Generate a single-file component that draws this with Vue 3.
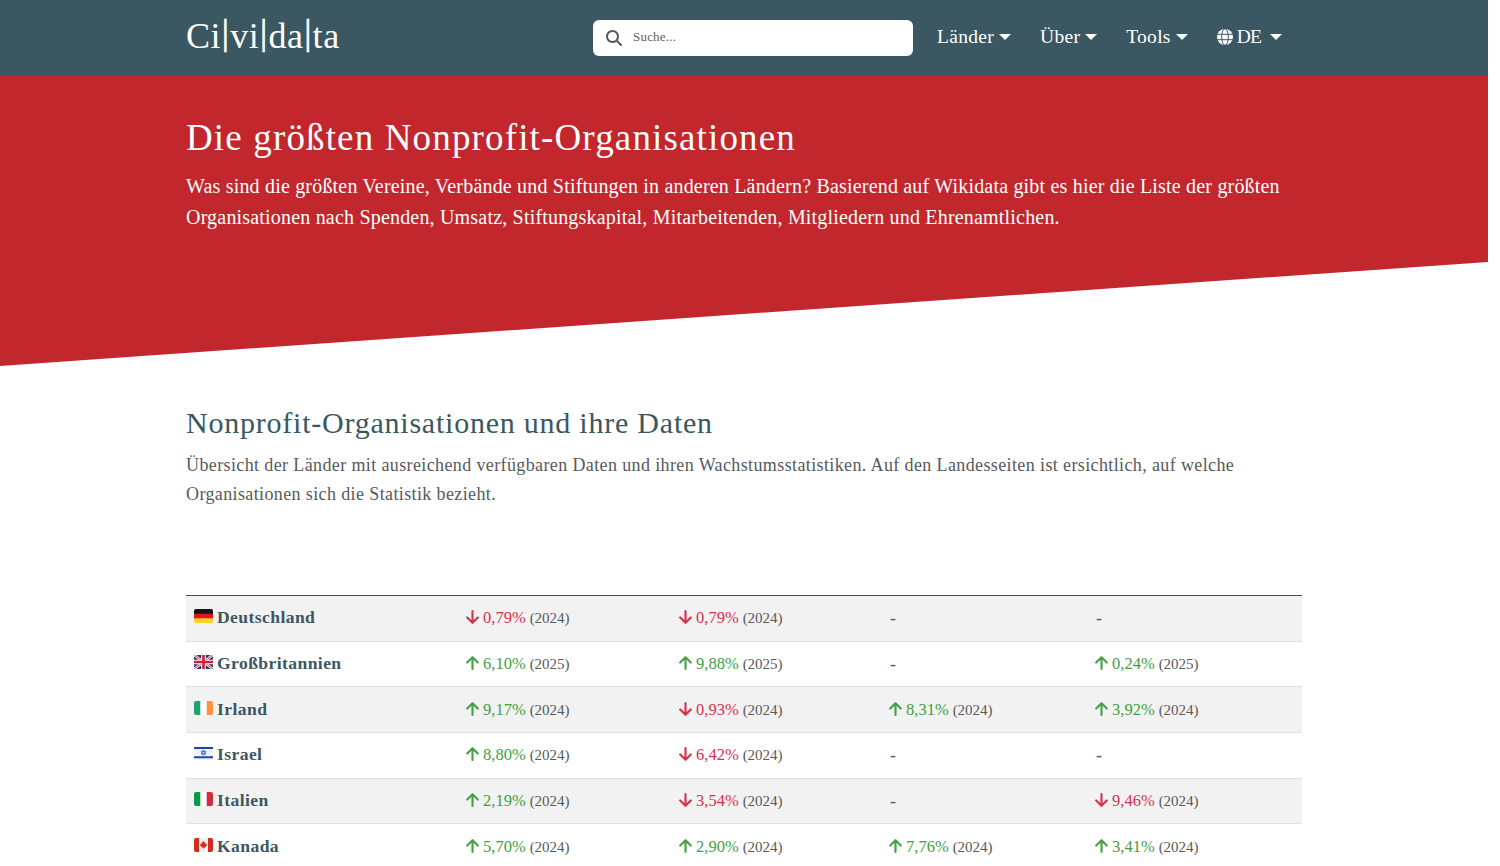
<script setup>
import {ref} from 'vue'

const menu = ['Länder', 'Über', 'Tools'];

const search = ref('');

const up = (value, year = 2024) => ({dir: 'up', value, year});
const down = (value, year = 2024) => ({dir: 'down', value, year});

const countries = [
    {flag: 'de', name: 'Deutschland', stats: [down('0,79%'), down('0,79%'), null, null]},
    {flag: 'gb', name: 'Großbritannien', stats: [up('6,10%', 2025), up('9,88%', 2025), null, up('0,24%', 2025)]},
    {flag: 'ie', name: 'Irland', stats: [up('9,17%'), down('0,93%'), up('8,31%'), up('3,92%')]},
    {flag: 'il', name: 'Israel', stats: [up('8,80%'), down('6,42%'), null, null]},
    {flag: 'it', name: 'Italien', stats: [up('2,19%'), down('3,54%'), null, down('9,46%')]},
    {flag: 'ca', name: 'Kanada', stats: [up('5,70%'), up('2,90%'), up('7,76%'), up('3,41%')]},
];
</script>

<template>
    <div class="page">
        <header class="header">
            <div class="container header__inner">
                <a class="logo">Ci<span class="logo__bar">|</span>vi<span class="logo__bar">|</span>da<span class="logo__bar">|</span>ta</a>
                <label class="search">
                    <svg class="search__icon" viewBox="0 0 512 512">
                        <path d="M416 208c0 45.900-14.900 88.300-40 122.700L502.600 457.400c12.500 12.500 12.500 32.800 0 45.300s-32.800 12.500-45.300 0L330.700 376c-34.400 25.200-76.800 40-122.700 40C93.100 416 0 322.900 0 208S93.100 0 208 0S416 93.100 416 208zM208 352a144 144 0 1 0 0-288 144 144 0 1 0 0 288z"/>
                    </svg>
                    <input v-model="search" class="search__input" type="text" placeholder="Suche...">
                </label>
                <nav class="nav">
                    <a v-for="item in menu" :key="item" class="nav__item">{{ item }}<i class="caret"></i></a>
                    <a class="nav__item nav__item--lang">
                        <svg class="nav__globe" viewBox="0 0 16 16">
                            <circle cx="8" cy="8" r="8" fill="#fff"/>
                            <g fill="none" stroke="#3b5762" stroke-width="1">
                                <ellipse cx="8" cy="8" rx="3.300" ry="8.300"/>
                                <path d="M0 5.300h16M0 10.700h16"/>
                            </g>
                        </svg>
                        DE<i class="caret"></i>
                    </a>
                </nav>
            </div>
        </header>

        <section class="hero">
            <div class="container">
                <h1 class="hero__title">Die größten Nonprofit-Organisationen</h1>
                <p class="hero__text">
                    <span class="line">Was sind die größten Vereine, Verbände und Stiftungen in anderen Ländern? Basierend auf Wikidata gibt es hier die Liste der größten</span>
                    <span class="line">Organisationen nach Spenden, Umsatz, Stiftungskapital, Mitarbeitenden, Mitgliedern und Ehrenamtlichen.</span>
                </p>
            </div>
        </section>

        <main class="container main">
            <h2 class="main__title">Nonprofit-Organisationen und ihre Daten</h2>
            <p class="main__text">
                <span class="line">Übersicht der Länder mit ausreichend verfügbaren Daten und ihren Wachstumsstatistiken. Auf den Landesseiten ist ersichtlich, auf welche</span>
                <span class="line">Organisationen sich die Statistik bezieht.</span>
            </p>

            <div class="table">
                <div v-for="country in countries" :key="country.flag" class="row">
                    <div class="cell cell--name">
                        <svg class="flag" viewBox="0 0 19 14">
                            <g v-if="country.flag === 'de'">
                                <path fill="#141414" d="M0 0h19v5H0z"/>
                                <path fill="#e01a1a" d="M0 4.700h19v5H0z"/>
                                <path fill="#ffd21f" d="M0 9.400h19V14H0z"/>
                            </g>
                            <g v-else-if="country.flag === 'gb'">
                                <path fill="#25356f" d="M0 0h19v14H0z"/>
                                <path stroke="#fff" stroke-width="2.600" d="M0 0l19 14M19 0L0 14"/>
                                <path stroke="#cf2436" stroke-width="1" d="M0 0l19 14M19 0L0 14"/>
                                <path stroke="#fff" stroke-width="4.600" d="M9.500 0v14M0 7h19"/>
                                <path stroke="#cf2436" stroke-width="2.700" d="M9.500 0v14M0 7h19"/>
                            </g>
                            <g v-else-if="country.flag === 'ie'">
                                <path fill="#fff" d="M0 0h19v14H0z"/>
                                <path fill="#21a070" d="M0 0h6.300v14H0z"/>
                                <path fill="#ff9145" d="M12.700 0H19v14h-6.300z"/>
                            </g>
                            <g v-else-if="country.flag === 'il'">
                                <path fill="#eef3fb" d="M0 0h19v14H0z"/>
                                <path fill="#1c45a8" d="M0 1h19v2H0zM0 10.200h19v2H0z"/>
                                <path fill="none" stroke="#3c68c8" stroke-width=".9" d="M9.500 4l2.300 4H7.200zM9.500 9.300L7.200 5.300h4.600z"/>
                            </g>
                            <g v-else-if="country.flag === 'it'">
                                <path fill="#fff" d="M0 0h19v14H0z"/>
                                <path fill="#0d9748" d="M0 0h6.300v14H0z"/>
                                <path fill="#d02d3e" d="M12.700 0H19v14h-6.300z"/>
                            </g>
                            <g v-else>
                                <path fill="#f4f1f0" d="M0 0h19v14H0z"/>
                                <path fill="#d52b20" d="M0 0h5v14H0zM14 0h5v14h-5z"/>
                                <path fill="#d52b20" d="M9.500 2.800l1 1.700 1-.4-.3 2 1.600-.7-.2 1.300.7.400-2.100 1.900.1.700-1.500-.2V11h-.6V9.500l-1.500.2.100-.7-2.100-1.900.7-.4-.2-1.300 1.600.7-.3-2 1 .4z"/>
                            </g>
                        </svg>
                        <a class="country">{{ country.name }}</a>
                    </div>
                    <div v-for="(stat, index) in country.stats" :key="index" class="cell">
                        <template v-if="stat">
                            <svg class="arrow" :class="'arrow--' + stat.dir" viewBox="0 0 14 16">
                                <path d="M7 14.500V2M1.300 7.500L7 1.800l5.700 5.700"/>
                            </svg>
                            <span class="value" :class="'value--' + stat.dir">{{ stat.value }}</span>
                            <span class="year">({{ stat.year }})</span>
                        </template>
                        <span v-else class="dash">-</span>
                    </div>
                </div>
            </div>
        </main>
    </div>
</template>

<style>
body {
    margin: 0;
    overflow: hidden;
    background-color: #fff;
}
</style>

<style scoped>
.page {
    width: 1488px;
    height: 866px;
    overflow: hidden;
    font-family: "Liberation Serif", serif;
    color: #58595b;
}

.container {
    width: 1116px;
    margin: 0 auto;
}

.header {
    height: 76px;
    background-color: #3b5762;
}

.header__inner {
    height: 100%;
    display: flex;
    align-items: center;
    padding-bottom: 2px;
    box-sizing: border-box;
    color: #fff;
}

.logo {
    width: 407px;
    margin-top: -2px;
    font-size: 36px;
    letter-spacing: .6px;
    line-height: 40px;
    white-space: nowrap;
}

.logo__bar {
    display: inline-block;
    margin: 0 .6px;
    transform: translateY(-4px);
    -webkit-text-stroke: .6px #fff;
}

.search {
    width: 320px;
    height: 36px;
    margin-top: 2px;
    padding: 0 13px;
    box-sizing: border-box;
    display: flex;
    align-items: center;
    gap: 11px;
    background-color: #fff;
    border-radius: 6px;
}

.search__icon {
    width: 16px;
    height: 16px;
    fill: #58595b;
}

.search__input {
    flex: 1;
    min-width: 0;
    padding: 0 0 2px;
    border: 0;
    outline: 0;
    font: 13px "Liberation Serif", serif;
    letter-spacing: .2px;
}

.search__input::placeholder {
    color: #5f6062;
}

.nav {
    display: flex;
    margin-left: 24px;
    font-size: 19.500px;
    letter-spacing: .3px;
    line-height: 30px;
}

.nav__item {
    display: flex;
    align-items: center;
    margin-right: 29px;
}

.nav__item--lang {
    margin-right: 0;
    letter-spacing: -.9px;
}

.nav__globe {
    width: 16px;
    height: 16px;
    margin-right: 4px;
}

.caret {
    margin-left: 5px;
    border: 6px solid transparent;
    border-top-color: #fff;
    border-bottom: 0;
}

.nav__item--lang .caret {
    margin-left: 9px;
}

.hero {
    height: 290px;
    background-color: #c1272d;
    clip-path: polygon(0 0, 100% 0, 100% 186px, 0 100%);
}

.hero .container {
    color: #fff;
    padding-top: 39px;
}

.hero__title {
    margin: 0;
    font-size: 37px;
    font-weight: 400;
    letter-spacing: 1.150px;
    line-height: 46px;
}

.hero__text {
    margin: 10px 0 0;
    font-size: 20px;
    letter-spacing: .190px;
    line-height: 31px;
}

.line {
    display: block;
    white-space: nowrap;
}

.main {
    padding-top: 38px;
}

.main__title {
    margin: 0;
    font-size: 30px;
    font-weight: 400;
    letter-spacing: .770px;
    line-height: 38px;
    color: #3b5762;
}

.main__text {
    margin: 9px 0 0;
    font-size: 18px;
    letter-spacing: .380px;
    line-height: 29px;
}

.table {
    margin-top: 86px;
    border-top: 1px solid #4a4a4d;
}

.row {
    display: grid;
    grid-template-columns: 272px 213px 210px 206px 1fr;
    height: 45.700px;
    box-sizing: border-box;
    border-bottom: 1px solid #dfe0e1;
}

.row:nth-child(odd) {
    background-color: #f2f2f2;
}

.cell {
    display: flex;
    align-items: center;
    padding-left: 8px;
    line-height: 28px;
}

.cell--name {
    padding-bottom: 2px;
}

.flag {
    width: 19px;
    height: 14px;
    margin: 0 4px 2px 0;
    border-radius: 2px;
}

.country {
    font-size: 17.600px;
    font-weight: 700;
    letter-spacing: .4px;
    color: #3b5762;
}

.arrow {
    width: 13px;
    height: 16px;
    margin: 0 4px 2px 0;
    fill: none;
    stroke: #46a147;
    stroke-width: 2.3;
    stroke-linecap: round;
    stroke-linejoin: round;
}

.arrow--down {
    stroke: #d9304c;
    transform: rotate(180deg);
}

.value {
    font-size: 16.500px;
    color: #3fa03f;
}

.value--down {
    color: #d9304c;
}

.year {
    margin-left: 4px;
    font-size: 15px;
}

.dash {
    padding-left: 1px;
    font-size: 18px;
}
</style>
